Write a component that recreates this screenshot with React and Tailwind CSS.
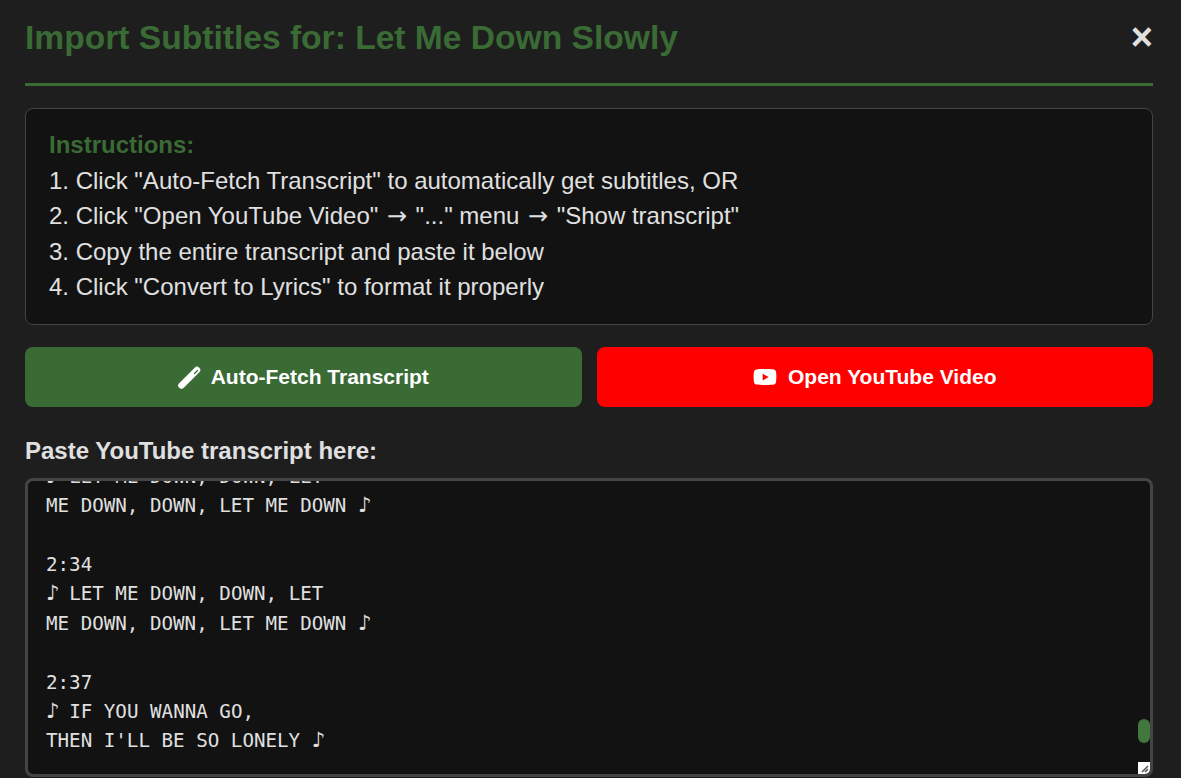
import { FaYoutube } from 'react-icons/fa';

const steps = [
  ['1. Click "Auto-Fetch Transcript" to automatically get subtitles, OR'],
  ['2. Click "Open YouTube Video" ', ' "..." menu ', ' "Show transcript"'],
  ['3. Copy the entire transcript and paste it below'],
  ['4. Click "Convert to Lyrics" to format it properly'],
];

const transcript = `♪ LET ME DOWN, DOWN, LET
ME DOWN, DOWN, LET ME DOWN ♪

2:34
♪ LET ME DOWN, DOWN, LET
ME DOWN, DOWN, LET ME DOWN ♪

2:37
♪ IF YOU WANNA GO,
THEN I'LL BE SO LONELY ♪`;

const Note = () => (
  <span className="font-['DejaVu_Sans',sans-serif] text-[21px] leading-none tracking-[-1.8px]">♪</span>
);

const Arrow = () => (
  <span className="inline-block w-[24px] text-center font-['DejaVu_Sans',sans-serif] leading-none">→</span>
);

export default function App() {
  return (
    <div className="h-[778px] overflow-hidden bg-[#1e1e1e] pr-[28px] pl-[25px] font-['Liberation_Sans',sans-serif] text-[#e0e0e0]">
      <div className="flex h-[86px] items-center justify-between border-b-[3px] border-[#3a6b35] pb-[7px]">
        <h2 className="text-[33.6px] leading-[40px] font-bold text-[#3a6b35]">Import Subtitles for: Let Me Down Slowly</h2>
        <button className="-mt-[3px] text-[38px] leading-none font-bold text-[#e0e0e0]">×</button>
      </div>

      <div className="mt-[22px] h-[217px] rounded-lg border border-[#444] bg-[#121212] px-[23px] pt-[18px]">
        <div className="text-[24px] leading-[35.5px] font-bold text-[#3a6b35]">Instructions:</div>
        {steps.map(parts => (
          <div key={parts[0]} className="text-[24px] leading-[35.5px]">
            {parts.map((p, i) => (
              <span key={p}>{i > 0 && <Arrow />}{p}</span>
            ))}
          </div>
        ))}
      </div>

      <div className="mt-[22px] flex gap-[15px]">
        <button className="flex h-[60px] flex-1 items-center justify-center gap-[10px] rounded-lg bg-[#3a6b35] text-[21px] font-bold text-white">
          <svg width="23" height="24" viewBox="0 0 23 24" fill="none">
            <path d="M3.5 20.5 19 5" stroke="white" strokeWidth="6.5" strokeLinecap="round" />
            <path d="M16.5 8.5 19.5 5.5" stroke="#3a6b35" strokeWidth="1.2" strokeLinecap="round" />
          </svg>
          Auto-Fetch Transcript
        </button>
        <button className="flex h-[60px] flex-1 items-center justify-center gap-[11px] rounded-lg bg-[#ff0000] text-[21px] font-bold text-white">
          <FaYoutube className="h-[24px] w-[24px]" />
          Open YouTube Video
        </button>
      </div>

      <div className="mt-[30px] text-[24px] leading-[28px] font-bold">Paste YouTube transcript here:</div>

      <div className="relative mt-[13px] h-[299px] overflow-hidden rounded-lg border-[3px] border-[#444] bg-[#121212]">
        <div className="-mt-[19.2px] pl-[18px] font-['DejaVu_Sans_Mono',monospace] text-[19.2px] leading-[29.4px]">
          {transcript.split('\n').map((line, i) => (
            <div key={i} className="h-[29.4px] whitespace-pre">
              {line.split('♪').map((part, j) => (
                <span key={j}>{j > 0 && <Note />}{part}</span>
              ))}
            </div>
          ))}
        </div>
        <div className="absolute top-[238px] right-0 h-[24px] w-[12px] rounded-full bg-[#41763c]" />
        <div className="absolute right-0 bottom-0 flex h-[12px] w-[12px] items-end justify-end bg-white">
          <svg width="12" height="12" viewBox="0 0 12 12" stroke="#555" strokeWidth="1.5">
            <path d="M4 10 10 4M7 10l3-3" />
          </svg>
        </div>
      </div>
    </div>
  );
}
